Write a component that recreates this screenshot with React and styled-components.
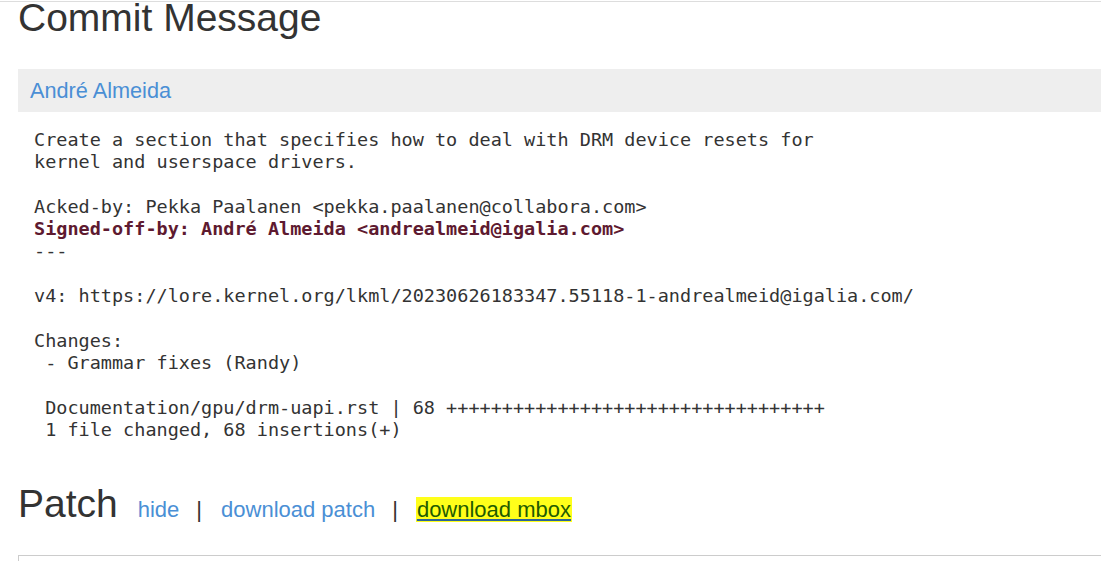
import React from "react";
import styled, { createGlobalStyle } from "styled-components";

const Global = createGlobalStyle`
  html, body { margin: 0; padding: 0; background: #fff; overflow: hidden; }
  body { font-family: "Liberation Sans", Arial, sans-serif; color: #333; }
`;

const TopRule = styled.div`
  margin-top: 1px;
  border-top: 1px solid #ddd;
`;

const Content = styled.div`
  padding-left: 18px;
`;

const Heading = styled.h2`
  margin: 0;
  font-size: 39px;
  font-weight: 400;
  line-height: 32px;
  color: #333;
`;

const AuthorBar = styled.div`
  margin-top: 35px;
  height: 43px;
  background: #eee;
  padding-left: 12px;
  display: flex;
  align-items: center;
`;

const Link = styled.a`
  color: #4a8fd5;
  text-decoration: none;
  font-size: 21.7px;
  line-height: 43px;
  cursor: pointer;
`;

const Message = styled.pre`
  margin: 17px 0 0 16px;
  font-family: "DejaVu Sans Mono", "Liberation Mono", monospace;
  font-size: 18.5px;
  line-height: 22.3px;
  color: #333;
  white-space: pre;
`;

const Signed = styled.span`
  font-weight: bold;
  color: #5e1a30;
`;

const PatchRow = styled.div`
  margin-top: 47px;
  display: flex;
  align-items: baseline;
`;

const PatchLinks = styled.div`
  margin-left: 20px;
  display: flex;
  align-items: baseline;
  font-size: 22px;
`;

const PatchLink = styled.a`
  color: ${(p) => (p.$marked ? "#1f5c00" : "#4a8fd5")};
  background: ${(p) => (p.$marked ? "#ffff1a" : "transparent")};
  text-decoration: ${(p) => (p.$marked ? "underline" : "none")};
  text-decoration-color: #2a6496;
  text-underline-offset: 2px;
  text-decoration-thickness: 2px;
  padding: ${(p) => (p.$marked ? "0 1px" : "0")};
  margin-left: ${(p) => (p.$marked ? "-1px" : "0")};
  line-height: 25px;
  cursor: pointer;
`;

const Sep = styled.span`
  margin: 0 19px 0 17px;
  color: #333;
`;

const DiffBox = styled.div`
  margin-top: 32px;
  height: 120px;
  border: 1px solid #ccc;
  border-right: none;
`;

const message = (
  <>
    {"Create a section that specifies how to deal with DRM device resets for\n"}
    {"kernel and userspace drivers.\n"}
    {"\n"}
    {"Acked-by: Pekka Paalanen <pekka.paalanen@collabora.com>\n"}
    <Signed>{"Signed-off-by: André Almeida <andrealmeid@igalia.com>"}</Signed>
    {"\n---\n"}
    {"\n"}
    {"v4: https://lore.kernel.org/lkml/20230626183347.55118-1-andrealmeid@igalia.com/\n"}
    {"\n"}
    {"Changes:\n"}
    {" - Grammar fixes (Randy)\n"}
    {"\n"}
    {" Documentation/gpu/drm-uapi.rst | 68 " + "+".repeat(34) + "\n"}
    {" 1 file changed, 68 insertions(+)"}
  </>
);

export default function App() {
  return (
    <>
      <Global />
      <TopRule />
      <Content>
        <Heading>Commit Message</Heading>
        <AuthorBar>
          <Link>André Almeida</Link>
        </AuthorBar>
        <Message>{message}</Message>
        <PatchRow>
          <Heading>Patch</Heading>
          <PatchLinks>
            <PatchLink>hide</PatchLink>
            <Sep>|</Sep>
            <PatchLink>download patch</PatchLink>
            <Sep>|</Sep>
            <PatchLink $marked>download mbox</PatchLink>
          </PatchLinks>
        </PatchRow>
        <DiffBox />
      </Content>
    </>
  );
}
